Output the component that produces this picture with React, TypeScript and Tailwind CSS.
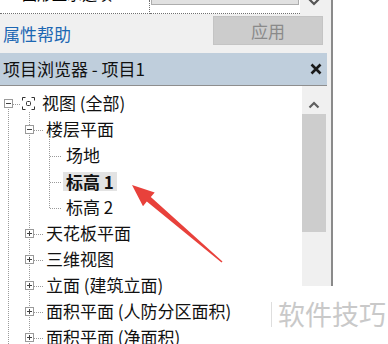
import React from "react";

function Expander({ plus }: { plus?: boolean }) {
  return (
    <svg width="9" height="9" className="shrink-0 block">
      <rect x="0.5" y="0.5" width="8" height="8" fill="white" stroke="#9a9a9a" />
      <line x1="2" y1="4.5" x2="7" y2="4.5" stroke="#404040" />
      {plus && <line x1="4.5" y1="2" x2="4.5" y2="7" stroke="#404040" />}
    </svg>
  );
}

function RootIcon() {
  return (
    <svg width="13" height="13" className="shrink-0 block">
      <g stroke="#333" strokeWidth="1" fill="none">
        <path d="M0.5 3.5 V0.5 H3.5" />
        <path d="M9.5 0.5 H12.5 V3.5" />
        <path d="M12.5 9.5 V12.5 H9.5" />
        <path d="M3.5 12.5 H0.5 V9.5" />
        <rect x="4.5" y="4.5" width="4" height="4" rx="1" />
      </g>
    </svg>
  );
}

const rowCls = "relative h-[26px] flex items-center whitespace-nowrap text-[17px] text-[#111]";

export default function App() {
  const lvl1Rows = [234, 260, 286, 312, 338];
  return (
    <div className="relative w-[388px] h-[344px] overflow-hidden bg-white font-['Noto_Sans_CJK_SC',sans-serif]">
      <div className="flex h-full">
        {/* panel */}
        <div className="w-[331px] h-full flex flex-col bg-[#f0f0f0]">
          {/* property grid fragment */}
          <div className="h-[14px] flex shrink-0">
            <div className="w-[150px] bg-white border-r border-b border-dotted border-[#707070] overflow-hidden">
              <div className="mt-[-16px] pl-[22px] text-[15px] leading-[20px] text-black">图形显示选项</div>
            </div>
            <div className="w-[150px] bg-white border-b border-dotted border-[#707070] overflow-hidden px-[1px]">
              <div className="mt-[-20px] h-[25px] bg-[#e1e1e1] border border-[#adadad] flex items-end justify-center text-[15px] leading-[17px] text-black pb-[4px]">
                编辑
              </div>
            </div>
            <div className="flex-1 flex justify-center">
              <svg width="14" height="8" className="ml-[-4px] mt-[-2px]">
                <path d="M2 1 L7 6 L12 1" stroke="#555" strokeWidth="2.2" fill="none" />
              </svg>
            </div>
          </div>
          {/* help row */}
          <div className="h-[39px] shrink-0 flex items-start justify-between pl-[3px] pr-[8px]">
            <span className="mt-[7px] text-[17px] leading-[25px] text-[#1c67b3]">属性帮助</span>
            <div className="mt-[2px] w-[110px] h-[29px] bg-[#cccccc] border border-[#c4c4c4] flex items-center justify-center text-[17px] text-[#8a8a8a]">
              应用
            </div>
          </div>
          {/* header */}
          <div className="w-[327px] h-[33px] shrink-0 bg-[#bfcedc] border-b border-[#8e8e8e] flex items-center justify-between pl-[3px] pr-[5px]">
            <span className="text-[17px] text-[#111]">项目浏览器 - 项目1</span>
            <svg width="12" height="12">
              <path d="M1.5 1.5 L10.5 10.5 M10.5 1.5 L1.5 10.5" stroke="#1a1a1a" strokeWidth="2.6" />
            </svg>
          </div>
          {/* tree */}
          <div className="flex-1 flex">
            <div className="w-[302px] bg-white pt-[4px]">
              <div className={rowCls + " pl-[4px]"}>
                <Expander />
                <span className="ml-[9px]"><RootIcon /></span>
                <span className="ml-[7px]">视图 (全部)</span>
              </div>
              <div className={rowCls + " pl-[25px]"}>
                <Expander />
                <span className="ml-[12px]">楼层平面</span>
              </div>
              <div className={rowCls + " pl-[66px]"}>场地</div>
              <div className={rowCls + " pl-[63px]"}>
                <span className="bg-[#e3e3e3] px-[3px] font-bold leading-[19px]">标高 1</span>
              </div>
              <div className={rowCls + " pl-[66px]"}>标高 2</div>
              {["天花板平面", "三维视图", "立面 (建筑立面)", "面积平面 (人防分区面积)", "面积平面 (净面积)"].map((t) => (
                <div key={t} className={rowCls + " pl-[25px]"}>
                  <Expander plus />
                  <span className="ml-[12px]">{t}</span>
                </div>
              ))}
            </div>
            {/* scrollbar */}
            <div className="w-[24px] bg-[#f0f0f0] flex flex-col items-center">
              <svg width="12" height="8" className="mt-[15px]">
                <path d="M1.5 6.5 L6 2 L10.5 6.5" stroke="#606060" strokeWidth="2.2" fill="none" />
              </svg>
              <div className="mt-[5px] w-[24px] h-[118px] bg-[#cdcdcd]" />
            </div>
          </div>
        </div>
        <div className="w-[2px] h-full bg-[#8a8a8a]" />
      </div>

      {/* tree connector lines */}
      <svg width="388" height="344" className="absolute left-0 top-0 pointer-events-none">
        <g stroke="#9a9a9a" strokeWidth="1" strokeDasharray="1 1" fill="none">
          <line x1="8.5" y1="109" x2="8.5" y2="344" />
          <line x1="13" y1="104.5" x2="21" y2="104.5" />
          <line x1="29.5" y1="112" x2="29.5" y2="126" />
          <line x1="29.5" y1="135" x2="29.5" y2="230" />
          {lvl1Rows.map((y, i) => (
            <line key={"v" + i} x1="29.5" y1={y + 5} x2="29.5" y2={i < lvl1Rows.length - 1 ? lvl1Rows[i + 1] - 4 : 344} />
          ))}
          {[130, ...lvl1Rows].map((y) => (
            <line key={"h" + y} x1="34" y1={y + 0.5} x2="44" y2={y + 0.5} />
          ))}
          <line x1="49.5" y1="135" x2="49.5" y2="208" />
          {[156, 182, 208].map((y) => (
            <line key={"l2" + y} x1="50" y1={y + 0.5} x2="62" y2={y + 0.5} />
          ))}
        </g>
      </svg>

      {/* red arrow */}
      <svg width="388" height="344" className="absolute left-0 top-0 pointer-events-none">
        <polygon
          points="132,185 154.7,192.4 150.8,197 222.5,261.6 221.5,262.4 146.8,201.6 143,206.2"
          fill="#e8413b"
        />
      </svg>

      {/* watermark */}
      <div className="absolute left-[252px] top-[286px] w-[136px] h-[58px] bg-white flex items-start">
        <div className="mt-[16px] ml-[19px] w-[1px] h-[25px] bg-[#dedede]" />
        <span className="ml-[6px] mt-[11px] text-[27px] leading-[34px] text-[#c9c9c9]">软件技巧</span>
      </div>
    </div>
  );
}
